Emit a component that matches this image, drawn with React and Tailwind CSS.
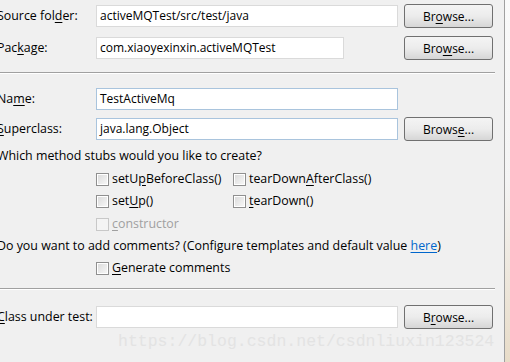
import React from 'react';

const font = { fontFamily: '"Open Sans", "Noto Sans CJK SC", sans-serif' };

const U = ({ children }) => <span className="underline underline-offset-2">{children}</span>;

const Browse = ({ children }) => (
    <button className="w-[89px] h-[24px] rounded-[3px] border border-[#707070] bg-gradient-to-b from-[#f4f4f4] via-[#ececec] to-[#d6d6d6] text-[12px] text-black shrink-0 pt-[1px]">
        {children}
    </button>
);

const Input = ({ w, value, blue }) => (
    <div className={`h-[22px] border bg-white flex items-center px-[3px] text-[12px] text-black ${blue ? 'border-[#a9c4dd]' : 'border-[#dadada]'} ${w}`}>
        {value}
    </div>
);

const Check = ({ disabled, children, w }) => (
    <div className={`flex items-center gap-[3px] ${w}`}>
        <span className={`w-[13px] h-[13px] border flex items-center justify-center ${disabled ? 'border-[#c8c8c8] bg-[#f4f4f4]' : 'border-[#8f8f8f] bg-white'}`}>
            <span className={`w-[9px] h-[9px] ${disabled ? 'bg-[#f4f4f4]' : 'bg-gradient-to-br from-[#dcdcdc] to-[#f6f6f6]'}`}></span>
        </span>
        <span className={disabled ? 'text-[#a0a0a0]' : 'text-black'}>{children}</span>
    </div>
);

const Separator = () => (
    <div className="w-[495px] h-[2px] border-t border-[#a0a0a0] border-b border-b-white"></div>
);

export default function App() {
    return (
        <div className="relative w-[510px] h-[362px] overflow-hidden bg-[#f0f0f0] flex" style={font}>
            <div className="w-[505px] h-full border-r border-[#a0a0a0] flex flex-col pt-[4px] text-[12.4px] text-black">
                <div className="flex items-center h-[24px]">
                    <span className="w-[99px] -ml-[3px] shrink-0">Source fol<U>d</U>er:</span>
                    <Input w="w-[302px]" value="activeMQTest/src/test/java" />
                    <div className="ml-[6px]"><Browse>Br<U>o</U>wse...</Browse></div>
                </div>
                <div className="flex items-center h-[24px] mt-[8px]">
                    <span className="w-[99px] -ml-[3px] shrink-0">Pac<U>k</U>age:</span>
                    <Input w="w-[248px]" value="com.xiaoyexinxin.activeMQTest" />
                    <div className="ml-[60px]"><Browse>Bro<U>w</U>se...</Browse></div>
                </div>
                <div className="mt-[12px]"><Separator /></div>
                <div className="flex items-center h-[24px] mt-[13px]">
                    <span className="w-[99px] -ml-[3px] shrink-0">Na<U>m</U>e:</span>
                    <Input w="w-[302px]" value="TestActiveMq" blue />
                </div>
                <div className="flex items-center h-[24px] mt-[6px]">
                    <span className="w-[99px] -ml-[3px] shrink-0"><U>S</U>uperclass:</span>
                    <Input w="w-[302px]" value="java.lang.Object" blue />
                    <div className="ml-[6px]"><Browse>Brows<U>e</U>...</Browse></div>
                </div>
                <div className="h-[16px] mt-[7px] leading-[16px] -ml-[3px]">Which method stubs would you like to create?</div>
                <div className="flex items-center h-[21px] mt-[5px] pl-[96px]">
                    <Check w="w-[137px]">setU<U>p</U>BeforeClass()</Check>
                    <Check>tearDown<U>A</U>fterClass()</Check>
                </div>
                <div className="flex items-center h-[21px] mt-[1px] pl-[96px]">
                    <Check w="w-[137px]">set<U>U</U>p()</Check>
                    <Check><U>t</U>earDown()</Check>
                </div>
                <div className="flex items-center h-[21px] mt-[2px] pl-[96px]">
                    <Check disabled><U>c</U>onstructor</Check>
                </div>
                <div className="h-[16px] mt-[3px] leading-[16px] -ml-[3px] whitespace-nowrap">
                    Do you want to add comments? (Configure templates and default value <span className="text-[#0066cc] underline underline-offset-2">here</span>)
                </div>
                <div className="flex items-center h-[21px] mt-[4px] pl-[96px]">
                    <Check><U>G</U>enerate comments</Check>
                </div>
                <div className="mt-[9px]"><Separator /></div>
                <div className="flex items-center h-[24px] mt-[15px]">
                    <span className="w-[99px] -ml-[3px] shrink-0"><U>C</U>lass under test:</span>
                    <Input w="w-[302px]" value="" />
                    <div className="ml-[6px]"><Browse>B<U>r</U>owse...</Browse></div>
                </div>
            </div>
            <div className="flex-1 h-full bg-gradient-to-b from-[#fafafa] via-[#f4f4f4] to-[#e8dcc8]"></div>
            <div className="absolute left-[118px] top-[331px] text-[16.5px] leading-[22px] text-[#e3e3e3] pointer-events-none" style={{ fontFamily: '"Liberation Mono", monospace' }}>
                https://blog.csdn.net/csdnliuxin123524
            </div>
        </div>
    );
}
